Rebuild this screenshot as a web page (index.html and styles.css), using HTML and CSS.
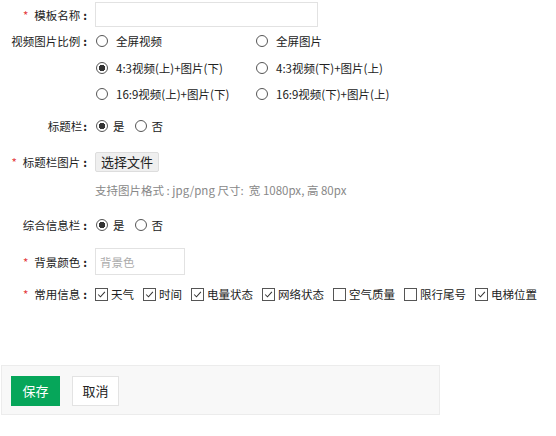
FILE: index.html
```html
<!DOCTYPE html>
<html lang="zh-CN">
  <head>
    <meta charset="utf-8" />
    <meta name="viewport" content="width=device-width" />
    <title>模板设置</title>
    <link rel="stylesheet" href="styles.css">
  </head>

  <body>
    <form class="tpl-form">
      <div class="row row-name">
        <label class="lbl"><span class="req">*</span>模板名称<span class="colon">:</span></label>
        <input class="txt txt-name" type="text" />
      </div>

      <div class="row row-ratio">
        <label class="lbl">视频图片比例<span class="colon">:</span></label>
        <div class="ratio-grid">
          <span class="opt"><span class="radio"></span>全屏视频</span>
          <span class="opt"><span class="radio"></span>全屏图片</span>
          <span class="opt"><span class="radio on"></span>4:3视频(上)+图片(下)</span>
          <span class="opt"><span class="radio"></span>4:3视频(下)+图片(上)</span>
          <span class="opt"><span class="radio"></span>16:9视频(上)+图片(下)</span>
          <span class="opt"><span class="radio"></span>16:9视频(下)+图片(上)</span>
        </div>
      </div>

      <div class="row row-title">
        <label class="lbl">标题栏<span class="colon tight">:</span></label>
        <span class="yn"><span class="radio on"></span>是</span>
        <span class="yn"><span class="radio"></span>否</span>
      </div>

      <div class="row row-file">
        <label class="lbl"><span class="req">*</span>标题栏图片<span class="colon">:</span></label>
        <button type="button" class="file-btn">选择文件</button>
      </div>
      <div class="hint">支持图片格式 : jpg/png 尺寸:&nbsp; 宽 1080px, 高 80px</div>

      <div class="row row-info">
        <label class="lbl">综合信息栏<span class="colon">:</span></label>
        <span class="yn"><span class="radio on"></span>是</span>
        <span class="yn"><span class="radio"></span>否</span>
      </div>

      <div class="row row-color">
        <label class="lbl"><span class="req">*</span>背景颜色<span class="colon">:</span></label>
        <input class="txt txt-color" type="text" placeholder="背景色" />
      </div>

      <div class="row row-common">
        <label class="lbl"><span class="req">*</span>常用信息<span class="colon">:</span></label>
        <span class="chk"><span class="box on"><svg viewBox="0 0 13 13"><path d="M2.5 6.5 L5.3 9.3 L10.5 3.5" /></svg></span>天气</span>
        <span class="chk"><span class="box on"><svg viewBox="0 0 13 13"><path d="M2.5 6.5 L5.3 9.3 L10.5 3.5" /></svg></span>时间</span>
        <span class="chk"><span class="box on"><svg viewBox="0 0 13 13"><path d="M2.5 6.5 L5.3 9.3 L10.5 3.5" /></svg></span>电量状态</span>
        <span class="chk"><span class="box on"><svg viewBox="0 0 13 13"><path d="M2.5 6.5 L5.3 9.3 L10.5 3.5" /></svg></span>网络状态</span>
        <span class="chk"><span class="box"></span>空气质量</span>
        <span class="chk"><span class="box"></span>限行尾号</span>
        <span class="chk"><span class="box on"><svg viewBox="0 0 13 13"><path d="M2.5 6.5 L5.3 9.3 L10.5 3.5" /></svg></span>电梯位置</span>
      </div>

      <div class="actions">
        <button type="button" class="btn btn-save">保存</button>
        <button type="button" class="btn btn-cancel">取消</button>
      </div>
    </form>
  </body>
</html>
```

FILE: styles.css
```css
html {
  box-sizing: border-box;
}

* {
  box-sizing: inherit;
}

body {
  margin: 0;
  background: #fff;
  color: #222;
  font: 11.5px/18px "Noto Sans CJK SC", "Noto Sans", sans-serif;
}

.tpl-form {
  padding-top: 2px;
}

.row {
  display: flex;
  align-items: center;
  white-space: nowrap;
}

.lbl {
  width: 95px;
  flex: none;
  text-align: right;
  padding-right: 8px;
  color: #222;
}

.req {
  color: #e4393c;
  margin-right: 6px;
}

.colon {
  margin-left: 3px;
  font-weight: bold;
}

.colon.tight {
  margin-left: 1px;
}

.txt {
  height: 25px;
  border: 1px solid #e2e2e2;
  padding: 0 4px;
  font: inherit;
  color: #333;
  outline: none;
}

.txt::placeholder {
  color: #aaa;
}

.txt-name {
  width: 223px;
}

.row-ratio {
  align-items: flex-start;
  margin-top: 1px;
}

.row-ratio .lbl {
  line-height: 26.5px;
}

.ratio-grid {
  display: grid;
  grid-template-columns: 160px 160px;
}

.opt {
  display: flex;
  align-items: center;
  height: 26.5px;
  gap: 8px;
  padding-left: 1px;
}

.radio {
  width: 12px;
  height: 12px;
  border: 1px solid #555;
  border-radius: 50%;
  flex: none;
  background: #fff;
}

.radio.on {
  background: radial-gradient(circle, #333 0 3px, #fff 3.5px);
}

.row-title {
  height: 26px;
  margin-top: 5.5px;
}

.yn {
  display: flex;
  align-items: center;
  gap: 5px;
  margin-right: 10px;
}

.row-title .yn:first-of-type,
.row-info .yn:first-of-type {
  margin-left: 1px;
}

.row-file {
  height: 26px;
  margin-top: 10px;
}

.file-btn {
  height: 20px;
  padding: 0 5px;
  border: 1px solid #ddd;
  border-radius: 2px;
  background: #efefef;
  color: #222;
  font: 13px/18px "Noto Sans CJK SC", sans-serif;
}

.hint {
  margin: 6px 0 0 95px;
  color: #888;
}

.row-info {
  height: 26px;
  margin-top: 13px;
}

.row-color {
  margin-top: 10px;
}

.txt-color {
  width: 90px;
  height: 27px;
}

.row-common {
  height: 26px;
  margin-top: 6px;
}

.chk {
  display: flex;
  align-items: center;
  flex: none;
  gap: 3px;
  margin-right: 9px;
}

.box {
  width: 13px;
  height: 13px;
  border: 1px solid #555;
  flex: none;
  display: flex;
  background: #fff;
}

.box svg {
  width: 11px;
  height: 11px;
  fill: none;
  stroke: #333;
  stroke-width: 1.2;
}

.actions {
  margin: 58px 0 0 1px;
  width: 439px;
  height: 50px;
  padding: 10px 9px;
  display: flex;
  gap: 12px;
  background: #f8f8f8;
  border: 1px solid #ececec;
}

.btn {
  height: 30px;
  font: 13px/18px "Noto Sans CJK SC", sans-serif;
  border-radius: 0;
  cursor: pointer;
}

.btn-save {
  width: 49px;
  background: #06a65a;
  color: #fff;
  border: 0;
}

.btn-cancel {
  width: 47px;
  background: #fff;
  color: #222;
  border: 1px solid #e3e3e3;
}
```
